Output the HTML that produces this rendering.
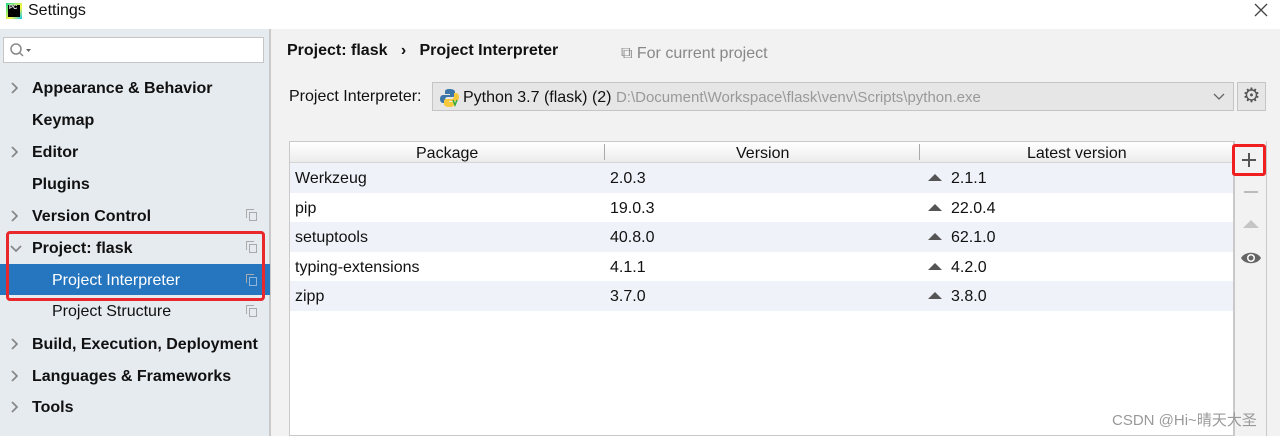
<!DOCTYPE html>
<html><head><meta charset="utf-8"><style>
*{margin:0;padding:0;box-sizing:border-box}
body{width:1280px;height:436px;overflow:hidden;background:#f2f2f2;font-family:"Liberation Sans","Noto Sans CJK SC",sans-serif;color:#111;position:relative}
.abs{position:absolute}
.title{left:0;top:0;width:1280px;height:29px;background:#fff}
.side{left:0;top:29px;width:271px;height:407px;background:#e6ebf0;border-right:2px solid #c9c9c9}
.item{position:absolute;left:0;width:270px;height:32px;font-size:16px;line-height:32px}
.item b{position:absolute;left:32px;top:2px}
.item .sub{position:absolute;left:52px;top:1px}
.arr{position:absolute;left:10px;top:11px;width:8px;height:12px}
.cp{position:absolute;left:249px;top:13px;width:8px;height:9px;border:1px solid #aaa}
.cp:after{content:"";position:absolute;left:-4px;top:-4px;width:7px;height:8px;border:1px solid #aaa;border-right:none;border-bottom:none}
.row{position:absolute;left:290px;width:943px;height:29.5px;font-size:16px;line-height:31px}
.row span{position:absolute}
.tri{display:inline-block;width:0;height:0;border-left:7px solid transparent;border-right:7px solid transparent;border-bottom:7px solid #555;margin-right:9px;vertical-align:2px}
</style></head><body>
<div class="abs title">
 <div class="abs" style="left:6px;top:3px;width:16px;height:16px;background:linear-gradient(135deg,#21d789,#fcf84a 60%,#07c3f2)"></div>
 <div class="abs" style="left:8px;top:5px;width:12px;height:12px;background:#000;color:#fff;font-size:6px;font-weight:bold;line-height:7px;padding-left:1px">PC</div>
 <div class="abs" style="left:28px;top:1px;font-size:16px;line-height:20px">Settings</div>
 <svg class="abs" style="left:1254px;top:3px" width="14" height="14"><path d="M1 1L13 13M13 1L1 13" stroke="#444" stroke-width="1.3"/></svg>
</div>
<div class="abs side">
 <div class="abs" style="left:3px;top:8px;width:261px;height:26px;background:#fff;border:1px solid #c5c5c5">
  <svg class="abs" style="left:5px;top:4px" width="24" height="16"><circle cx="7" cy="7" r="5" fill="none" stroke="#888" stroke-width="1.5"/><line x1="11" y1="11" x2="14" y2="14" stroke="#888" stroke-width="1.5"/><path d="M17 7h5l-2.5 3z" fill="#666"/></svg>
 </div>
</div>
<svg width="0" height="0" style="position:absolute"><defs><path id="ch" d="M2 1l5 5-5 5" fill="none" stroke="#888" stroke-width="1.8"/></defs></svg>
<div class="item" style="top:71px"><svg class="arr"><use href="#ch"/></svg><b>Appearance &amp; Behavior</b></div>
<div class="item" style="top:103px"><b>Keymap</b></div>
<div class="item" style="top:135px"><svg class="arr"><use href="#ch"/></svg><b>Editor</b></div>
<div class="item" style="top:167px"><b>Plugins</b></div>
<div class="item" style="top:199px"><svg class="arr"><use href="#ch"/></svg><b>Version Control</b><i class="cp"></i></div>
<div class="item" style="top:231px"><svg class="arr" style="width:12px;height:8px;top:13px"><path d="M1 2l5 5 5-5" fill="none" stroke="#888" stroke-width="1.8"/></svg><b>Project: flask</b><i class="cp"></i></div>
<div class="item" style="top:264px;background:#2675bf;color:#fff;height:31px;line-height:31px"><span class="sub">Project Interpreter</span><i class="cp" style="border-color:#8fb6df"></i></div>
<div class="item" style="top:295px"><span class="sub">Project Structure</span><i class="cp"></i></div>
<div class="item" style="top:327px"><svg class="arr"><use href="#ch"/></svg><b>Build, Execution, Deployment</b></div>
<div class="item" style="top:359px"><svg class="arr"><use href="#ch"/></svg><b>Languages &amp; Frameworks</b></div>
<div class="item" style="top:390px"><svg class="arr"><use href="#ch"/></svg><b>Tools</b></div>
<div class="abs" style="left:6px;top:231px;width:259px;height:70px;border:3px solid #e8282d;border-radius:4px"></div>

<div class="abs" style="left:287px;top:42px;font-size:16px;font-weight:bold">Project: flask &nbsp;&nbsp;›&nbsp;&nbsp; Project Interpreter</div>
<div class="abs" style="left:621px;top:45px;font-size:16px;color:#888">⧉ For current project</div>
<div class="abs" style="left:289px;top:88px;font-size:16px">Project Interpreter:</div>
<div class="abs" style="left:432px;top:82px;width:802px;height:29px;background:#e6e6e6;border:1px solid #c5c5c5;font-size:16px;line-height:29px">
 <svg class="abs" style="left:7px;top:5px" width="20" height="20"><path d="M9 1c-4 0-4 2-4 3v2h5v1H3c-2 0-3 2-3 4s1 4 3 4h2v-3c0-2 1-3 3-3h5c1 0 2-1 2-2V4c0-2-2-3-6-3z" fill="#3c76a8"/><path d="M10 19c4 0 4-2 4-3v-2H9v-1h7c2 0 3-2 3-4s-1-4-3-4h-2v3c0 2-1 3-3 3H6c-1 0-2 1-2 2v3c0 2 2 3 6 3z" fill="#f5c93b"/><path d="M13 12l2 5 2-5" stroke="#3a3" stroke-width="1.5" fill="none"/></svg>
 <span class="abs" style="left:30px">Python 3.7 (flask) (2) <span style="color:#999;font-size:15px">D:\Document\Workspace\flask\venv\Scripts\python.exe</span></span>
 <svg class="abs" style="right:8px;top:10px" width="12" height="8"><path d="M1 1l5 5 5-5" fill="none" stroke="#666" stroke-width="1.3"/></svg>
</div>
<div class="abs" style="left:1237px;top:82px;width:29px;height:29px;background:#e6e6e6;border:1px solid #c5c5c5;color:#555;font-size:20px;text-align:center;line-height:26px">⚙</div>

<div class="abs" style="left:289px;top:141px;width:945px;height:295px;background:#fff;border:1px solid #c9c9c9"></div>
<div class="abs" style="left:290px;top:142px;width:943px;height:21px;background:linear-gradient(#fff,#ececec);border-bottom:1px solid #d5d5d5;font-size:16px;line-height:23px">
 <span class="abs" style="left:126px">Package</span><span class="abs" style="left:314px;top:2px;width:1px;height:16px;background:#aaa"></span>
 <span class="abs" style="left:446px">Version</span><span class="abs" style="left:629px;top:2px;width:1px;height:16px;background:#aaa"></span>
 <span class="abs" style="left:737px">Latest version</span>
</div>
<div class="row" style="top:163px;background:#eff2f8"><span style="left:5px">Werkzeug</span><span style="left:320px">2.0.3</span><span style="left:638px"><i class="tri"></i>2.1.1</span></div>
<div class="row" style="top:192.5px"><span style="left:5px">pip</span><span style="left:320px">19.0.3</span><span style="left:638px"><i class="tri"></i>22.0.4</span></div>
<div class="row" style="top:222px;background:#eff2f8"><span style="left:5px">setuptools</span><span style="left:320px">40.8.0</span><span style="left:638px"><i class="tri"></i>62.1.0</span></div>
<div class="row" style="top:251.5px"><span style="left:5px">typing-extensions</span><span style="left:320px">4.1.1</span><span style="left:638px"><i class="tri"></i>4.2.0</span></div>
<div class="row" style="top:281px;background:#eff2f8"><span style="left:5px">zipp</span><span style="left:320px">3.7.0</span><span style="left:638px"><i class="tri"></i>3.8.0</span></div>

<div class="abs" style="left:1234px;top:141px;width:33px;height:295px;border-left:1px solid #c9c9c9;border-right:1px solid #c9c9c9;background:#f2f2f2"></div>
<div class="abs" style="left:1232px;top:144px;width:34px;height:32px;border:3px solid #f01e1e;border-radius:3px"><svg class="abs" style="left:7px;top:6px" width="14" height="14"><path d="M7 0v14M0 7h14" stroke="#555" stroke-width="2"/></svg></div>
<div class="abs" style="left:1244px;top:191px;width:14px;height:2px;background:#bbb"></div>
<div class="abs" style="left:1243px;top:220px;border-left:8px solid transparent;border-right:8px solid transparent;border-bottom:8px solid #c5c5c5"></div>
<svg class="abs" style="left:1240px;top:250px" width="22" height="16"><path d="M1 8c4-7 16-7 20 0c-4 7-16 7-20 0z" fill="#666"/><circle cx="11" cy="8" r="4" fill="#fff"/><circle cx="11" cy="8" r="2.5" fill="#666"/></svg>
<div class="abs" style="left:1112px;top:409px;font-size:15px;color:#999">CSDN @Hi~晴天大圣</div>
</body></html>
